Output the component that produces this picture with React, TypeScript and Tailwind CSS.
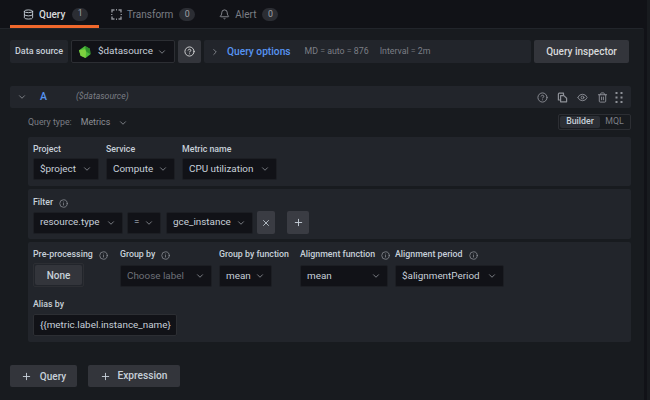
import { Bell, ChevronDown, ChevronRight, CircleHelp, Database, Eye, Info, Plus, Trash2, X } from 'lucide-react';

function Select({ value, width, muted }: { value: string; width: string; muted?: boolean }) {
  return (
    <div className={`flex h-[22px] items-center justify-between rounded-[2px] border border-[#1c1e23] bg-[#111217] pl-[6px] pr-[6px] ${width}`}>
      <span className={`text-[9.9px] whitespace-nowrap ${muted ? 'text-[#6e7178]' : 'text-[#c7d0d9]'}`}>{value}</span>
      <ChevronDown size={10} strokeWidth={2} className="shrink-0 text-[#8e9198]" />
    </div>
  );
}

function Label({ text, info, tight }: { text: string; info?: boolean; tight?: boolean }) {
  return (
    <div className={`flex h-[14px] items-center gap-[6px] text-[8.8px] font-medium whitespace-nowrap text-[#c7d0d9] ${tight ? 'mb-[1px]' : 'mb-[3px]'}`}>
      {text}
      {info && <Info size={9} className="shrink-0 text-[#8e9198]" />}
    </div>
  );
}

function Section({ children }: { children: React.ReactNode }) {
  return <div className="rounded-[2px] bg-[#22252b] px-[5px]">{children}</div>;
}

function TabBadge({ n }: { n: number }) {
  return <span className="flex h-[13px] w-[16px] items-center justify-center rounded-full bg-[#2b2d33] text-[8.8px] text-[#9fa1a7]">{n}</span>;
}

export default function App() {
  return (
    <div className="flex h-[400px] w-[650px] overflow-hidden bg-[#111217] font-['Roboto',sans-serif]">
      <div className="flex w-[644px] flex-col">
        {/* Tabs */}
        <div className="flex h-[28px] pl-[10px]">
          <div className="flex h-[28px] w-[89px] items-center border-b-[3px] border-[#f0682c] pl-[13px] pt-[3px]">
            <Database size={11} className="shrink-0 text-[#c7d0d9]" />
            <span className="ml-[5px] text-[10px] font-medium text-[#d8d9da]">Query</span>
            <span className="ml-[7px]"><TabBadge n={1} /></span>
          </div>
          <div className="ml-[12px] flex items-center pt-[1px]">
            <svg width="11" height="11" viewBox="0 0 11 11" fill="none" stroke="#8e9198" strokeWidth="1.4" className="shrink-0">
              <path d="M1 3.5V1h2.5M7.5 1H10v2.5M10 7.5V10H7.5M3.5 10H1V7.5M5 .7h1M5 10.3h1M.7 5v1M10.3 5v1" />
            </svg>
            <span className="ml-[5px] text-[10px] text-[#7b7e85]">Transform</span>
            <span className="ml-[6px]"><TabBadge n={0} /></span>
          </div>
          <div className="ml-[24px] flex items-center pt-[1px]">
            <Bell size={11} className="shrink-0 text-[#8e9198]" />
            <span className="ml-[5px] text-[10px] text-[#7b7e85]">Alert</span>
            <span className="ml-[6px]"><TabBadge n={0} /></span>
          </div>
        </div>

        {/* Panel */}
        <div className="flex-1 rounded-tr-[2px] border-t border-[#22252b] bg-[#181b1f] pl-[10px] pr-[13px]">
          {/* Data source row */}
          <div className="mt-[11px] flex h-[23px] gap-[3px]">
            <div className="flex w-[58px] items-center justify-center rounded-[2px] bg-[#22252b] text-[9px] font-medium whitespace-nowrap text-[#c7d0d9]">Data source</div>
            <div className="flex w-[104px] items-center rounded-[2px] border border-[#2c2e33] bg-[#111217] pl-[7px] pr-[7px]">
              <svg width="12" height="12" viewBox="0 0 22 22" className="shrink-0">
                <polygon points="11,0 20,5 21,15 12,22 3,18 0,8" fill="#4dbb3a" />
                <polygon points="11,0 20,5 21,15 13,10" fill="#2f8f2a" />
                <polygon points="0,8 11,6 13,10 12,22 3,18" fill="#7ed13f" />
              </svg>
              <span className="ml-[7px] text-[9.9px] text-[#c7d0d9]">$datasource</span>
              <ChevronDown size={10} strokeWidth={2} className="ml-auto shrink-0 text-[#8e9198]" />
            </div>
            <div className="flex w-[23px] items-center justify-center rounded-[2px] bg-[#33353b]">
              <CircleHelp size={11} className="text-[#d8d9da]" />
            </div>
            <div className="flex w-[327px] items-center rounded-[2px] bg-[#22252b] pl-[6px]">
              <ChevronRight size={10} className="shrink-0 text-[#8e9198]" />
              <span className="ml-[7px] text-[10.2px] font-medium text-[#5794f2]">Query options</span>
              <span className="ml-[14px] text-[8.8px] text-[#7b7e85]">MD = auto = 876</span>
              <span className="ml-[11px] text-[8.8px] text-[#7b7e85]">Interval = 2m</span>
            </div>
            <div className="flex w-[95px] items-center justify-center rounded-[2px] bg-[#33353b] text-[10px] font-medium text-[#d8d9da]">Query inspector</div>
          </div>

          {/* Query header */}
          <div className="mt-[23px] flex h-[22px] items-center rounded-[2px] bg-[#22252b] pl-[7px] pr-[8px]">
            <ChevronDown size={10} strokeWidth={2} className="shrink-0 text-[#8e9198]" />
            <span className="ml-[13px] text-[10.5px] font-medium text-[#5794f2]">A</span>
            <span className="ml-[29px] text-[8.7px] italic text-[#7b7e85]">($datasource)</span>
            <div className="ml-auto flex items-center gap-[9px] text-[#8e9198]">
              <CircleHelp size={11} />
              <svg width="11" height="11" viewBox="0 0 11 11" fill="none" stroke="currentColor" strokeWidth="1.2" strokeLinejoin="round">
                <path d="M6.5 3.6V1.2H2.2A1 1 0 0 0 1.4 2v6H3.6" />
                <path d="M3.6 3.6h3.2L9.6 6.2v3.6H3.6z" />
              </svg>
              <Eye size={11} />
              <Trash2 size={11} />
              <svg width="8" height="11" viewBox="0 0 8 11" fill="currentColor" className="ml-[-2px]">
                <rect x="0.5" width="2" height="2" /><rect x="5.5" width="2" height="2" />
                <rect x="0.5" y="4.5" width="2" height="2" /><rect x="5.5" y="4.5" width="2" height="2" />
                <rect x="0.5" y="9" width="2" height="2" /><rect x="5.5" y="9" width="2" height="2" />
              </svg>
            </div>
          </div>

          {/* Query type */}
          <div className="mt-[6px] flex h-[16px] items-center pl-[18px]">
            <span className="mt-[1px] text-[8.8px] text-[#7b7e85]">Query type:</span>
            <span className="ml-[9px] mt-[1px] text-[8.8px] text-[#8e9198]">Metrics</span>
            <ChevronDown size={10} strokeWidth={2} className="ml-[8px] mt-[1px] shrink-0 text-[#8e9198]" />
            <div className="ml-auto flex h-[16px] w-[73px] items-center rounded-[2px] border border-[#2c2e33] p-[1px] text-[8.8px]">
              <span className="flex h-full w-[40px] items-center justify-center rounded-[2px] bg-[#2b2e34] font-medium text-[#c7d0d9]">Builder</span>
              <span className="flex-1 text-center text-[#7b7e85]">MQL</span>
            </div>
          </div>

          {/* Editor rows */}
          <div className="mt-[7px] flex flex-col gap-[3px] pl-[18px]">
            <Section>
              <div className="flex gap-[7px] pb-[6px] pt-[6px]">
                <div><Label text="Project" tight /><Select value="$project" width="w-[66px]" /></div>
                <div><Label text="Service" tight /><Select value="Compute" width="w-[69px]" /></div>
                <div><Label text="Metric name" tight /><Select value="CPU utilization" width="w-[95px]" /></div>
              </div>
            </Section>
            <Section>
              <div className="pb-[5px] pt-[7px]">
                <Label text="Filter" info tight />
                <div className="flex items-center">
                  <Select value="resource.type" width="w-[90px]" />
                  <div className="ml-[4px]"><Select value="=" width="w-[34px]" /></div>
                  <div className="ml-[5px]"><Select value="gce_instance" width="w-[87px]" /></div>
                  <div className="ml-[4px] flex h-[23px] w-[18px] items-center justify-center rounded-[2px] bg-[#3a3c43]"><X size={10} strokeWidth={2} className="text-[#c7d0d9]" /></div>
                  <div className="ml-[12px] flex h-[23px] w-[22px] items-center justify-center rounded-[2px] bg-[#3a3c43]"><Plus size={11} strokeWidth={2} className="text-[#c7d0d9]" /></div>
                </div>
              </div>
            </Section>
            <Section>
              <div className="pb-[6px] pt-[6px]">
                <div className="flex">
                  <div className="w-[87px]">
                    <Label text="Pre-processing" info />
                    <div className="-mt-[2px] w-[51px] rounded-[2px] border border-[#2c2e33] p-[1px]">
                      <div className="flex h-[20px] items-center justify-center rounded-[2px] bg-[#33353b] text-[10px] font-medium text-[#c7d0d9]">None</div>
                    </div>
                  </div>
                  <div className="w-[99px]"><Label text="Group by" info /><Select value="Choose label" width="w-[92px]" muted /></div>
                  <div className="w-[81px]"><Label text="Group by function" /><Select value="mean" width="w-[53px]" /></div>
                  <div className="w-[95px]"><Label text="Alignment function" info /><Select value="mean" width="w-[88px]" /></div>
                  <div><Label text="Alignment period" info /><Select value="$alignmentPeriod" width="w-[109px]" /></div>
                </div>
                <div className="mt-[11px]">
                  <Label text="Alias by" />
                  <div className="-mt-[1px] flex h-[22px] w-[144px] items-center rounded-[2px] border border-[#2c2e33] bg-[#111217] pl-[6px] text-[9.9px] whitespace-nowrap text-[#c7d0d9]">{'{{metric.label.instance_name}'}</div>
                </div>
              </div>
            </Section>
          </div>

          {/* Add buttons */}
          <div className="mt-[23px] flex gap-[11px]">
            <div className="flex h-[22px] w-[67px] items-center justify-center gap-[8px] rounded-[2px] bg-[#33353b] text-[10px] font-medium text-[#c7d0d9]"><Plus size={11} strokeWidth={2} />Query</div>
            <div className="flex h-[22px] w-[92px] items-center justify-center gap-[6px] rounded-[2px] bg-[#33353b] text-[10.2px] font-medium text-[#c7d0d9]"><Plus size={11} strokeWidth={2} />Expression</div>
          </div>
        </div>
      </div>
      <div className="ml-[3px] w-[3px] bg-[#181b1f]" />
    </div>
  );
}
